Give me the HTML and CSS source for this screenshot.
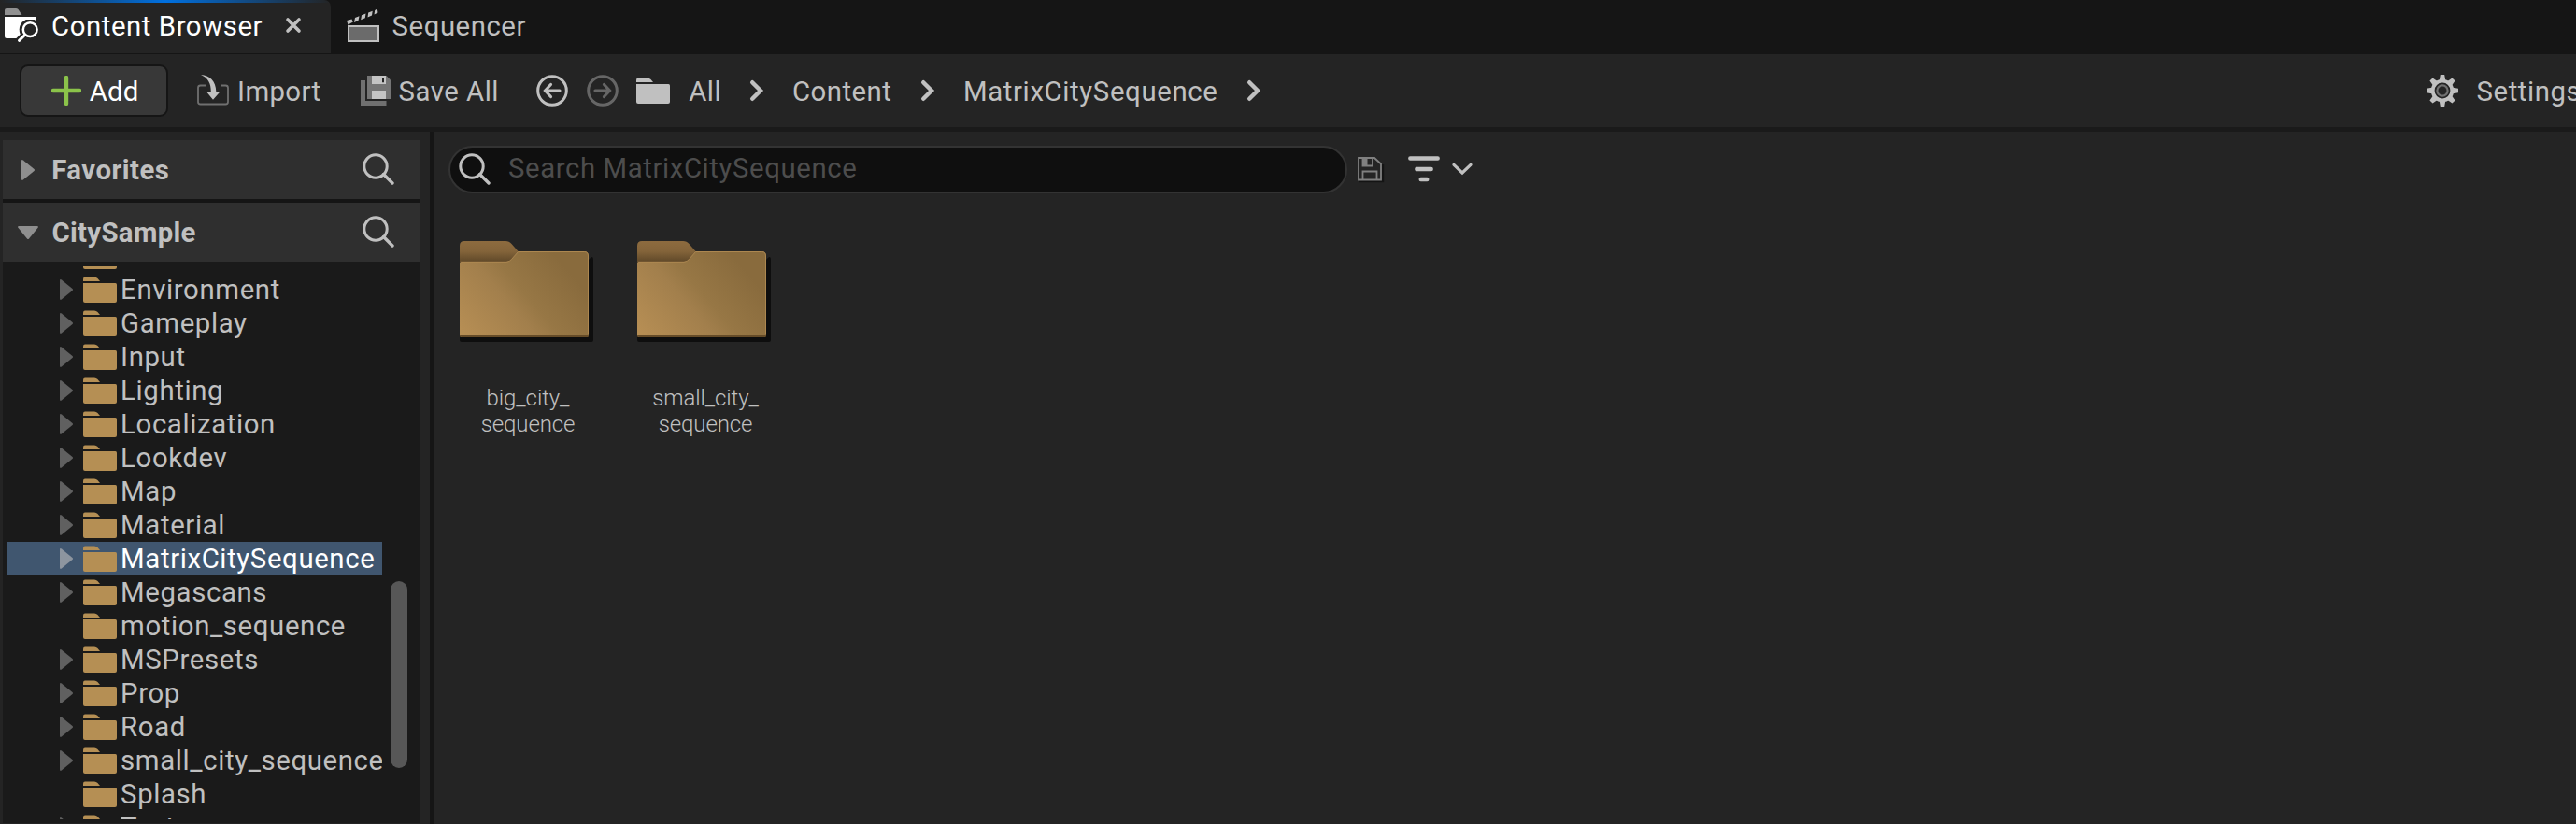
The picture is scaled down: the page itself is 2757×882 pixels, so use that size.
FILE: index.html
```
<!DOCTYPE html>
<html lang="en">
<head>
<meta charset="utf-8">
<title>Content Browser</title>
<link rel="stylesheet" href="styles.css">
</head>
<body>
<svg class="defs" aria-hidden="true">
  <defs>
    <symbol id="search" viewBox="0 0 34 34"><circle cx="14" cy="14" r="12.2" fill="none" stroke="currentColor" stroke-width="3"/><path d="M22.5 22.5L32 32" stroke="currentColor" stroke-width="3.4" stroke-linecap="round"/></symbol>
    <symbol id="chevron" viewBox="0 0 16 24"><path d="M3.2 3.2L12 12L3.2 20.8" fill="none" stroke="currentColor" stroke-width="4.4" stroke-linecap="round" stroke-linejoin="miter"/></symbol>
    <symbol id="folder" viewBox="0 0 36 28"><path d="M0 5V2.5Q0 .5 2 .5H12Q14 .5 15.500 2L18 5Z"/><path d="M0 7H34.500Q36 7 36 8.500V26Q36 28 34 28H2Q0 28 0 26Z"/></symbol>
    <symbol id="expand" viewBox="0 0 14 22"><path d="M0 1.500Q0-.6 1.800.4L13.500 10Q14.500 11 13.500 12L1.800 21.600Q0 22.600 0 20.500Z"/></symbol>
    <linearGradient id="front" gradientUnits="userSpaceOnUse" x1="10" y1="105" x2="108" y2="22">
      <stop offset="0" stop-color="#b68e54"/><stop offset=".45" stop-color="#a27f4c"/><stop offset=".6" stop-color="#977745"/><stop offset="1" stop-color="#896b3d"/>
    </linearGradient>
    <linearGradient id="tab" x1="0" y1="0" x2="0" y2="1">
      <stop offset="0" stop-color="#8d6b3f"/><stop offset=".5" stop-color="#84643a"/><stop offset="1" stop-color="#604929"/>
    </linearGradient>
    <symbol id="bigfolder" viewBox="0 0 144 110">
      <path d="M0 20H138Q143 14 143 20V106Q143 108 141 108H2Q0 108 0 106Z" fill="#0e0e0e"/>
      <path d="M0 22V5Q0 0 5 0H49Q53 0 55.500 3L62.500 11L54 22Z" fill="url(#tab)"/>
      <path d="M0 24Q0 22 2 22H50Q53.500 22 55.500 19.500L62.500 11H133.500Q138 11 138 16V101Q138 103 136 103H2Q0 103 0 101Z" fill="url(#front)"/>
      <path d="M.5 22.300H50Q53.500 22 55.500 19.500L62.500 11.500H133.500Q137.500 11.500 137.500 16V100" fill="none" stroke="#b08a52" stroke-width=".9"/>
      <path d="M0 101H138Q138 103 136 103H2Q0 103 0 101Z" fill="#664c28"/>
    </symbol>
  </defs>
</svg>

<div class="window">
  <header class="tabs">
    <div class="tab active">
      <svg class="tab-icon" width="38" height="38" viewBox="4 8 38 38"><path d="M5 16V11Q5 9 7 9H17Q18.500 9 19.500 10L23.500 16Z" fill="#909090"/><path d="M5 18H37Q39 18 39 20V32L30 41H7Q5 41 5 39Z" fill="#fff"/><circle cx="32.200" cy="31.700" r="11.500" fill="#242424"/><path d="M26 38L20 44" stroke="#242424" stroke-width="8"/><path d="M28 19.500H38.500" stroke="#fff" stroke-width="3"/><circle cx="32.200" cy="31.700" r="7.400" fill="none" stroke="#fff" stroke-width="2.500"/><path d="M26.500 37.500L20.500 43.300" stroke="#fff" stroke-width="3" stroke-linecap="round"/></svg>
      <span class="tab-title">Content Browser</span>
      <svg class="close" width="18" height="18" viewBox="0 0 18 18"><path d="M3 3L15 15M15 3L3 15" stroke="#c0c0c0" stroke-width="3.600" stroke-linecap="round"/></svg>
    </div>
    <div class="tab">
      <svg class="clap" width="38" height="38" viewBox="370 8 38 38"><rect x="373" y="28" width="32" height="16" fill="#6b6b6b" stroke="#c0c0c0" stroke-width="2"/><path d="M371 22L376.500 20.500L377.800 23.500L372.500 26.500ZM380 19L384.500 17.300L383.500 22L379 24ZM387 16.200L391.500 14.500L390.800 19.300L386.200 21.200ZM394.200 13.500L398.700 11.800L398 16.600L393.500 18.400ZM401.200 11L403.800 9.500L404.500 13.500L400.500 15.600Z" fill="#c0c0c0"/></svg>
      <span class="seq-title">Sequencer</span>
    </div>
  </header>

  <nav class="toolbar">
    <button class="add"><svg width="32" height="32" viewBox="0 0 32 32"><path d="M16 2V30M2 16H30" stroke="#8bc34a" stroke-width="4.400" stroke-linecap="round"/></svg><span>Add</span></button>
    <svg class="i-import" width="34" height="36" viewBox="211 78 34 36"><path d="M220 90.500H214.500Q212 90.500 212 93V108Q212 110.500 214.500 110.500H241.500Q244 110.500 244 108V93Q244 90.500 241.500 90.500H237" fill="none" stroke="#707070" stroke-width="1.800"/><path d="M215 79C224.500 79.500 231 86 231.300 97H235.700L228 105.800L220.800 97H225.800C225.800 88.500 223 82.500 215 79Z" fill="#c0c0c0"/></svg>
    <span class="t-import">Import</span>
    <svg class="i-save" width="32" height="34" viewBox="386 80 32 34"><path d="M386 86H391V108H413.500V113H386Z" fill="#707070"/><path d="M393 81H413.500L418 85.500V106H393Z" fill="#757575"/><path d="M398 81H413V90H398ZM398 97H413V106H398Z" fill="#c4c4c4"/><path d="M409 83.300H411V88.300H409Z" fill="#242424"/></svg>
    <span class="t-save">Save All</span>
    <svg class="i-back" width="34" height="34" viewBox="0 0 34 34"><g fill="none" stroke="#c0c0c0" stroke-width="3"><circle cx="17" cy="17" r="15.300"/><path d="M25 17H10M15.500 10.500L9.500 17L15.500 23.500" stroke-linecap="round" stroke-width="3.200"/></g></svg>
    <svg class="i-fwd" width="34" height="34" viewBox="0 0 34 34"><g fill="none" stroke="#666" stroke-width="3"><circle cx="17" cy="17" r="15.300"/><path d="M9 17H24M18.500 10.500L24.500 17L18.500 23.500" stroke-linecap="round" stroke-width="3.200"/></g></svg>
    <svg class="i-folder" width="36" height="28"><use href="#folder"/></svg>
    <span class="t-all">All</span>
    <svg class="c1" width="16" height="24"><use href="#chevron"/></svg>
    <span class="t-content">Content</span>
    <svg class="c2" width="16" height="24"><use href="#chevron"/></svg>
    <span class="t-matrix">MatrixCitySequence</span>
    <svg class="c3" width="16" height="24"><use href="#chevron"/></svg>
    <div class="settings">
      <svg width="34" height="34" viewBox="-17 -17 34 34"><g fill="#c0c0c0"><g id="teeth"><path id="tooth" d="M-3.400-10L-2.200-17H2.200L3.400-10ZM-3.400 10L-2.200 17H2.200L3.400 10Z"/><use href="#tooth" transform="rotate(90)"/></g><use href="#teeth" transform="rotate(45)"/></g><circle r="10.300" fill="none" stroke="#c0c0c0" stroke-width="3.800"/><circle r="5.600" fill="none" stroke="#707070" stroke-width="2.200"/></svg>
      <span>Settings</span>
    </div>
  </nav>

  <main class="body">
    <aside class="sidebar">
      <div class="head"><svg class="shut" width="14" height="22"><use href="#expand"/></svg><span class="fav">Favorites</span><svg class="find" width="34" height="34"><use href="#search"/></svg></div>
      <div class="head"><svg class="open" width="22" height="14" viewBox="0 0 22 14"><path d="M1.500 0H20.500Q22.600 0 21.600 1.800L12 13.500Q11 14.500 10 13.500L.4 1.800Q-.6 0 1.500 0Z"/></svg><span class="city">CitySample</span><svg class="find" width="34" height="34"><use href="#search"/></svg></div>
      <div class="tree">
        <div class="rows">
          <div class="row"><svg class="arrow"><use href="#expand"/></svg><svg class="fold"><use href="#folder"/></svg><span></span></div>
          <div class="row"><svg class="arrow"><use href="#expand"/></svg><svg class="fold"><use href="#folder"/></svg><span>Environment</span></div>
          <div class="row"><svg class="arrow"><use href="#expand"/></svg><svg class="fold"><use href="#folder"/></svg><span>Gameplay</span></div>
          <div class="row"><svg class="arrow"><use href="#expand"/></svg><svg class="fold"><use href="#folder"/></svg><span>Input</span></div>
          <div class="row"><svg class="arrow"><use href="#expand"/></svg><svg class="fold"><use href="#folder"/></svg><span>Lighting</span></div>
          <div class="row"><svg class="arrow"><use href="#expand"/></svg><svg class="fold"><use href="#folder"/></svg><span>Localization</span></div>
          <div class="row"><svg class="arrow"><use href="#expand"/></svg><svg class="fold"><use href="#folder"/></svg><span>Lookdev</span></div>
          <div class="row"><svg class="arrow"><use href="#expand"/></svg><svg class="fold"><use href="#folder"/></svg><span>Map</span></div>
          <div class="row"><svg class="arrow"><use href="#expand"/></svg><svg class="fold"><use href="#folder"/></svg><span>Material</span></div>
          <div class="row selected"><svg class="arrow"><use href="#expand"/></svg><svg class="fold"><use href="#folder"/></svg><span>MatrixCitySequence</span></div>
          <div class="row"><svg class="arrow"><use href="#expand"/></svg><svg class="fold"><use href="#folder"/></svg><span>Megascans</span></div>
          <div class="row leaf"><svg class="arrow"><use href="#expand"/></svg><svg class="fold"><use href="#folder"/></svg><span>motion_sequence</span></div>
          <div class="row"><svg class="arrow"><use href="#expand"/></svg><svg class="fold"><use href="#folder"/></svg><span>MSPresets</span></div>
          <div class="row"><svg class="arrow"><use href="#expand"/></svg><svg class="fold"><use href="#folder"/></svg><span>Prop</span></div>
          <div class="row"><svg class="arrow"><use href="#expand"/></svg><svg class="fold"><use href="#folder"/></svg><span>Road</span></div>
          <div class="row"><svg class="arrow"><use href="#expand"/></svg><svg class="fold"><use href="#folder"/></svg><span>small_city_sequence</span></div>
          <div class="row leaf"><svg class="arrow"><use href="#expand"/></svg><svg class="fold"><use href="#folder"/></svg><span>Splash</span></div>
          <div class="row"><svg class="arrow"><use href="#expand"/></svg><svg class="fold"><use href="#folder"/></svg><span>Texture</span></div>
        </div>
        <div class="scrollbar"></div>
      </div>
    </aside>
    <div class="splitter"></div>
    <section class="content">
      <div class="filterbar">
        <div class="searchbox"><svg width="34" height="34"><use href="#search"/></svg><span>Search MatrixCitySequence</span></div>
        <svg class="disk" width="30" height="30" viewBox="0 0 30 30"><g fill="none" stroke-width="1.800"><path d="M3 27H28V9" stroke="#141414" stroke-width="2.400"/><path d="M2 2H19L26 8.500V25.500H2ZM6.500 25V16.500H21.500V25M6.500 2V10.500H17V2" stroke="#808080"/></g><path d="M6 2H11.500V10.500H6Z" fill="#808080"/></svg>
        <svg class="lines" width="34" height="28" viewBox="0 0 34 28"><path d="M2.300 2.500H31.700M9.300 14H24.700M13.700 25H20.300" stroke="#c0c0c0" stroke-width="4.400" stroke-linecap="round"/></svg>
        <svg class="down" width="22" height="14" viewBox="0 0 22 14"><path d="M2 2.300L11 11L20 2.300" fill="none" stroke="#c0c0c0" stroke-width="3.200" stroke-linecap="round"/></svg>
      </div>
      <div class="tiles">
        <div class="tile"><svg width="144" height="110"><use href="#bigfolder"/></svg><p>big_city_<br>sequence</p></div>
        <div class="tile"><svg width="144" height="110"><use href="#bigfolder"/></svg><p>small_city_<br>sequence</p></div>
      </div>
    </section>
  </main>
</div>
</body>
</html>
```
FILE: styles.css
```
* { box-sizing: border-box; }
body {
  margin: 0;
  background: #242424;
  color: #c0c0c0;
  font: 29.33px/36px Roboto, "Liberation Sans", sans-serif;
  letter-spacing: .55px;
  overflow: hidden;
}
svg { display: block; flex: none; }
span { white-space: nowrap; flex: none; }
.defs { position: absolute; width: 0; height: 0; }
.window { display: flex; flex-direction: column; width: 2757px; height: 882px; overflow: hidden; }

/* Tab strip */
.tabs { display: flex; height: 58px; flex: none; background: #151515; }
.tab { display: flex; height: 58px; align-items: flex-start; padding-top: 10px; }
.tab svg { margin-top: -2px; }
.tab.active {
  width: 354px;
  height: 57px;
  color: #fff;
  border-radius: 0 7px 0 0;
  background: linear-gradient(90deg, #242424, #0070e0 50%, #242424) 0 0 / 100% 3px no-repeat, #242424;
}
.tab-icon { margin-left: 4px; }
.tab-title { margin-left: 13px; width: 231px; letter-spacing: .57px; }
.tab .close { margin: 8px 0 0 19px; }
.clap { margin-left: 16px; }
.seq-title { margin-left: 11.6px; }

/* Toolbar */
.toolbar { display: flex; align-items: center; height: 78px; flex: none; padding-left: 21px; }
.toolbar > span { position: relative; top: 1px; }
.add {
  display: flex;
  align-items: center;
  width: 159px;
  height: 56px;
  padding: 0 0 0 32px;
  border: 2px solid #151515;
  border-radius: 9px;
  background: #383838;
  color: #fff;
  font: inherit;
  letter-spacing: .25px;
}
.add span { margin: 2px 0 0 8.700px; }
.i-import { margin-left: 31px; }
.t-import { margin-left: 9px; width: 92px; letter-spacing: .4px; }
.i-save { margin-left: 40px; }
.t-save { margin-left: 8.600px; width: 110.400px; letter-spacing: .5px; }
.i-back { margin-left: 37px; }
.i-fwd { margin-left: 20px; }
.i-folder { margin-left: 19px; }
.t-all { margin-left: 20.200px; width: 36.800px; }
.c1 { margin-left: 28.500px; }
.t-content { margin-left: 29.500px; width: 110px; letter-spacing: .47px; }
.c2 { margin-left: 27.500px; }
.t-matrix { margin-left: 29.500px; width: 275px; letter-spacing: .64px; }
.c3 { margin-left: 28px; }
.settings { display: flex; align-items: center; width: 160px; margin-left: auto; overflow: hidden; }
.settings span { margin: 2px 0 0 19.600px; }

/* Panels */
.body { display: flex; flex: 1; min-height: 0; border-top: 5px solid #1a1a1a; }
.sidebar { width: 460px; padding: 9px 10px 1px 3px; display: flex; flex-direction: column; flex: none; }
.head {
  display: flex;
  align-items: center;
  height: 63px;
  flex: none;
  background: #2f2f2f;
  font-weight: 700;
  letter-spacing: .4px;
}
.head + .head { height: 67px; border-top: 4px solid #151515; }
.head svg { fill: #8f8f8f; }
.shut { margin-left: 20px; }
.open { margin-left: 16px; }
.fav { margin-left: 18.200px; letter-spacing: .5px; }
.city { margin-left: 14.400px; letter-spacing: .35px; }
.head .find { margin: -1px 28px 0 auto; }
.tree { position: relative; flex: 1; min-height: 0; background: #1a1a1a; padding: 5px 0 4px 5px; }
.rows { width: 401px; height: 592px; overflow: hidden; }
.row { display: flex; align-items: center; height: 36px; padding-left: 56px; letter-spacing: .63px; }
.row:first-child { margin-top: -29px; }
.row span { margin-left: 4.100px; }
.arrow { width: 14px; height: 22px; fill: #606060; }
.fold { width: 36px; height: 28px; margin-left: 11px; fill: #b58f54; }
.leaf .arrow { visibility: hidden; }
.selected { background: #40566f; color: #fff; }
.selected .arrow { fill: #8d959f; }
.scrollbar { position: absolute; left: 415px; top: 342px; width: 18px; height: 200px; border-radius: 9px; background: #575757; }
.splitter { width: 4px; flex: none; background: #151515; }

/* Content area */
.content { flex: 1; padding: 15px 0 0 16px; }
.filterbar { display: flex; align-items: center; height: 51px; }
.searchbox {
  display: flex;
  align-items: center;
  width: 962px;
  height: 51px;
  padding-left: 9px;
  border: 2px solid #333;
  border-radius: 26px;
  background: #0f0f0f;
}
.searchbox svg { margin-top: -1px; }
.searchbox span { margin: -3px 0 0 19px; color: #4d4d4d; letter-spacing: .6px; }
.disk { margin-left: 10px; }
.lines { margin: -1px 0 0 25px; }
.down { margin: -2px 0 0 13px; }
.i-folder { fill: #c0c0c0; }
.tiles { display: flex; gap: 46px; padding: 51px 0 0 11.500px; }
.tile { width: 144px; }
.tile p { margin: 44px 0 0 3px; text-align: center; font-size: 24px; line-height: 28px; font-weight: 300; letter-spacing: -.1px; }
```
